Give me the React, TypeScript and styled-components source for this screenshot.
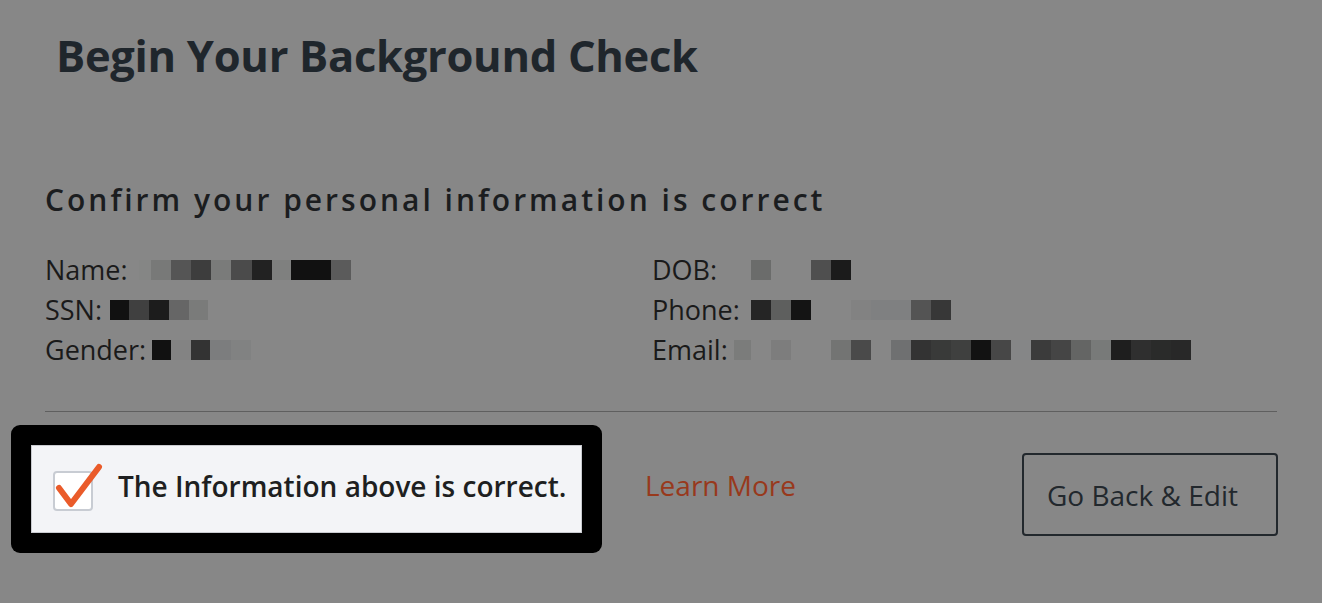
import React from "react";
import styled, { createGlobalStyle } from "styled-components";

const GlobalStyle = createGlobalStyle`
  html, body {
    margin: 0;
    padding: 0;
    background: #878787;
  }
  body {
    font-family: "Open Sans", "Noto Sans", "Liberation Sans", sans-serif;
  }
`;

type Cell = [string | null, number?];

const Page = styled.div`
  width: 1322px;
  min-height: 603px;
  box-sizing: border-box;
  padding: 30px 0 0 45px;
  background: #878787;
  overflow: hidden;
`;

const Column = styled.div`
  width: 1232px;
`;

const Heading = styled.h1`
  margin: 0 0 0 11px;
  font-size: 43.5px;
  line-height: 52px;
  font-weight: 700;
  color: #1f262c;
  letter-spacing: -0.3px;
`;

const SubHeading = styled.h2`
  margin: 98px 0 0 0;
  font-size: 30px;
  line-height: 40px;
  font-weight: 600;
  letter-spacing: 3px;
  color: #1b1d1f;
`;

const InfoGrid = styled.div`
  margin-top: 30px;
  display: grid;
  grid-template-columns: 607px 1fr;
  grid-auto-rows: 40px;
`;

const InfoRow = styled.div`
  font-size: 27px;
  line-height: 40px;
  color: #1a1a1a;
  white-space: nowrap;
`;

const MosaicStrip = styled.span<{ $offset: number }>`
  display: inline-flex;
  height: 20px;
  margin-left: ${(p) => p.$offset}px;
`;

const MosaicCell = styled.span<{ $color: string | null; $w: number }>`
  display: block;
  width: ${(p) => p.$w}px;
  height: 20px;
  background: ${(p) => p.$color ?? "transparent"};
`;

const Divider = styled.hr`
  margin: 41px 0 0 0;
  border: 0;
  height: 1px;
  background: #5f5f5f;
`;

const ActionRow = styled.div`
  display: flex;
  align-items: flex-start;
  margin-top: 13px;
`;

const Highlight = styled.div`
  margin-left: -34px;
  background: #000;
  border-radius: 9px;
  padding: 20px;
`;

const ConfirmPanel = styled.label`
  box-sizing: border-box;
  width: 551px;
  height: 88px;
  display: flex;
  align-items: center;
  gap: 25px;
  padding-left: 21px;
  background: #f3f4f7;
  border: 1px solid #c9cbd0;
`;

const CheckBox = styled.span`
  position: relative;
  box-sizing: border-box;
  width: 40px;
  height: 40px;
  flex: none;
  margin-top: 3px;
  border: 2px solid #c8ccd3;
  border-radius: 4px;
  background: #fff;
`;

const CheckMark = styled.svg`
  position: absolute;
  left: -2px;
  top: -12px;
  width: 50px;
  height: 50px;
  overflow: visible;
`;

const ConfirmText = styled.span`
  margin-top: -6px;
  font-size: 28px;
  font-weight: 600;
  color: #1e1f21;
  white-space: nowrap;
`;

const LearnMore = styled.a`
  margin: 40px 0 0 43px;
  font-size: 28px;
  line-height: 40px;
  color: #98391c;
  text-decoration: none;
`;

const EditButton = styled.button`
  margin: 28px -1px 0 auto;
  box-sizing: border-box;
  width: 256px;
  height: 83px;
  padding: 0 0 0 23px;
  text-align: left;
  background: transparent;
  border: 2px solid #22282d;
  border-radius: 4px;
  font-family: inherit;
  font-size: 28px;
  color: #22282d;
`;

function Mosaic({ cells, offset = 0 }: { cells: Cell[]; offset?: number }) {
  return (
    <MosaicStrip $offset={offset}>
      {cells.map(([c, w], i) => (
        <MosaicCell key={i} $color={c} $w={w ?? 20} />
      ))}
    </MosaicStrip>
  );
}

const nameCells: Cell[] = [
  ["#858685", 12], ["#787978"], ["#555555"], ["#3d3d3d"], ["#7a7b7a"], ["#4b4b4b", 21],
  ["#222222"], ["#7f807f", 19], ["#111111", 40], ["#5b5b5b"],
];
const ssnCells: Cell[] = [
  ["#111111", 19], ["#404040"], ["#1c1c1c"], ["#666666"], ["#7a7b7a", 19],
];
const genderCells: Cell[] = [
  ["#111111", 19], ["#838383"], ["#333333", 19], ["#7c7d7e", 21], ["#818282"],
];
const dobCells: Cell[] = [
  ["#6b6c6b"], [null, 40], ["#4f4f4f"], ["#1b1b1b"],
];
const phoneCells: Cell[] = [
  ["#252525"], ["#5e5f5e"], ["#141414"], [null, 40], ["#828282"], ["#7f8081", 40], ["#545454"], ["#373737"],
];
const emailCells: Cell[] = [
  ["#7b7c7b", 17], [null], ["#7d7d7d"], [null, 40], ["#737473"], ["#4a4a4a"], [null],
  ["#6f7071"], ["#333333"], ["#393a39"], ["#3f403f"], ["#121212"], ["#474747"], ["#858687"],
  ["#3b3b3b"], ["#454545"], ["#646564"], ["#787a79"], ["#1e1e1e"], ["#2f2f2f"], ["#2a2b2a"], ["#282828"],
];

export default function App() {
  return (
    <Page>
      <GlobalStyle />
      <Column>
        <Heading>Begin Your Background Check</Heading>
        <SubHeading>Confirm your personal information is correct</SubHeading>
        <InfoGrid>
          <InfoRow>Name:<Mosaic cells={nameCells} offset={11} /></InfoRow>
          <InfoRow>DOB:<Mosaic cells={dobCells} offset={34} /></InfoRow>
          <InfoRow>SSN:<Mosaic cells={ssnCells} offset={8} /></InfoRow>
          <InfoRow>Phone:<Mosaic cells={phoneCells} offset={11} /></InfoRow>
          <InfoRow>Gender:<Mosaic cells={genderCells} offset={6} /></InfoRow>
          <InfoRow>Email:<Mosaic cells={emailCells} offset={6} /></InfoRow>
        </InfoGrid>
        <Divider />
        <ActionRow>
          <Highlight>
            <ConfirmPanel>
              <CheckBox>
                <CheckMark viewBox="0 0 50 50">
                  <polyline
                    points="6,27 18,43 46,6"
                    fill="none"
                    stroke="#ea5b2a"
                    strokeWidth="6"
                    strokeLinecap="round"
                    strokeLinejoin="round"
                  />
                </CheckMark>
              </CheckBox>
              <ConfirmText>The Information above is correct.</ConfirmText>
            </ConfirmPanel>
          </Highlight>
          <LearnMore href="#">Learn More</LearnMore>
          <EditButton type="button">Go Back &amp; Edit</EditButton>
        </ActionRow>
      </Column>
    </Page>
  );
}
